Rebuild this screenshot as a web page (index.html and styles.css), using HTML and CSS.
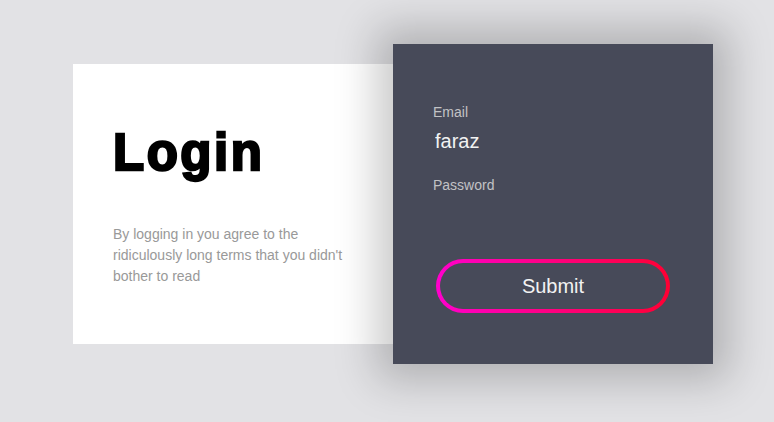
FILE: index.html
```html
<!DOCTYPE html>
<html lang="en">
<head>
  <meta charset="UTF-8">
  <meta name="viewport" content="width=device-width, initial-scale=1">
  <title>Login</title>
  <link rel="stylesheet" href="styles.css">
</head>
<body>

  <div class="page">
    <div class="container">
      <!-- Lado izquierdo -->
      <div class="left">
        <h1 class="login">Login</h1>
        <p class="eula">By logging in you agree to the ridiculously long terms that you didn't bother to read</p>
      </div>

      <!-- Lado derecho -->
      <div class="right">
        <form class="form">
          <label for="email">Email</label>
          <input type="email" id="email" value="faraz">
          <label for="password">Password</label>
          <input type="password" id="password">
          <button type="button" class="submit">Submit</button>
        </form>
      </div>
    </div>
  </div>

</body>
</html>
```

FILE: styles.css
```css
/* Colores */
:root {
  --page-bg: #e2e2e5;
  --panel-bg: #474a59;
  --label-color: #c2c2c5;
  --input-color: #f2f2f2;
  --eula-color: #999999;
  --grad-start: #ff00cc;
  --grad-end: #ff0033;
}

body {
  margin: 0;
  background-color: var(--page-bg);
  font-family: "Liberation Sans", Arial, sans-serif;
  height: 100vh;
  overflow: hidden;
}

.page {
  padding: 44px 0 0 73px;
}

/* Contenedor principal */
.container {
  display: flex;
  align-items: center;
  width: 640px;
  height: 320px;
}

/* Tarjeta blanca */
.left {
  background-color: #ffffff;
  width: 320px;
  height: 280px;
  box-sizing: border-box;
  padding: 59px 40px 0 40px;
}

/* Titulo muy grueso (imita Arial Black) */
.login {
  margin: 0 0 42px 0;
  font-size: 51px;
  font-weight: 900;
  letter-spacing: 2.5px;
  line-height: normal;
  color: #000000;
  -webkit-text-stroke: 2.4px #000000;
}

.eula {
  margin: 0;
  color: var(--eula-color);
  font-size: 14px;
  line-height: 1.5;
}

/* Panel oscuro */
.right {
  position: relative;
  background-color: var(--panel-bg);
  width: 320px;
  height: 320px;
  box-shadow: 0 0 40px 16px rgba(0, 0, 0, 0.22);
  color: var(--input-color);
  box-sizing: border-box;
  padding: 40px;
}

.form {
  display: flex;
  flex-direction: column;
}

label {
  display: block;
  color: var(--label-color);
  font-size: 14px;
  height: 16px;
  line-height: 16px;
  margin-top: 20px;
  margin-bottom: 5px;
}

input {
  background: transparent;
  border: 0;
  padding: 0 0 0 2px;
  margin: 0;
  color: var(--input-color);
  font-family: inherit;
  font-size: 20px;
  height: 32px;
  line-height: 32px;
  outline: none;
  width: 100%;
}

/* Boton con borde degradado */
.submit {
  align-self: center;
  width: 234px;
  height: 54px;
  margin-top: 29px;
  border: 4px solid transparent;
  border-radius: 27px;
  background:
    linear-gradient(var(--panel-bg), var(--panel-bg)) padding-box,
    linear-gradient(to right, var(--grad-start), var(--grad-end)) border-box;
  color: var(--input-color);
  font-family: inherit;
  font-size: 20px;
  cursor: pointer;
}
```
